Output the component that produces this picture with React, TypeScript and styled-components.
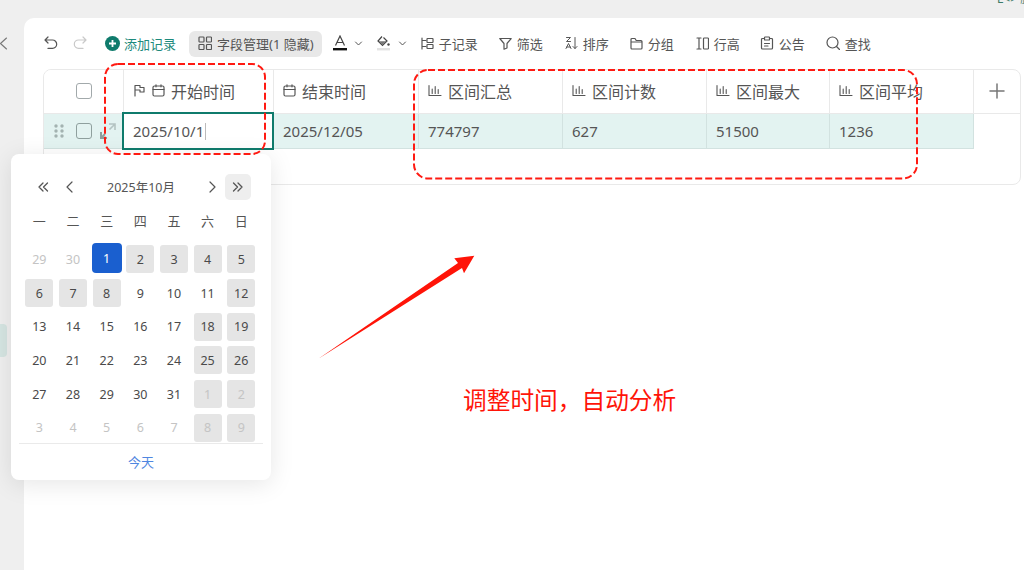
import styled, { createGlobalStyle } from "styled-components";
import type { ReactNode } from "react";

const GlobalStyle = createGlobalStyle`
  html, body {
    margin: 0;
    padding: 0;
    background: #efefef;
  }
  * {
    box-sizing: border-box;
  }
`;

const Page = styled.div`
  position: relative;
  display: flex;
  width: 1024px;
  height: 570px;
  overflow: hidden;
  background: #efefef;
  color: #444;
  font-family: "Noto Sans", "Noto Sans CJK SC", sans-serif;
`;

const Sidebar = styled.div`
  display: flex;
  flex-direction: column;
  flex: 0 0 24px;
  padding-top: 37px;
  color: #777;
`;

const SideMarker = styled.div`
  width: 7px;
  height: 33px;
  margin-top: 274px;
  border-radius: 0 4px 4px 0;
  background: #d5e5e2;
`;

const CornerText = styled.div`
  position: absolute;
  top: -8px;
  left: 997px;
  font-size: 12px;
  line-height: 14px;
  color: #3d7a68;
  white-space: nowrap;
`;

const Panel = styled.main`
  flex: 1;
  margin-top: 18px;
  padding: 12px 3px 0 19px;
  border-top-left-radius: 10px;
  background: #fff;
`;

const Toolbar = styled.div`
  display: flex;
  align-items: center;
  height: 26px;
  margin-bottom: 13px;
  font-size: 13px;
  color: #555;
`;

const ToolIcon = styled.span<{ $w: number; $mr?: number; $c?: string }>`
  display: inline-flex;
  flex: 0 0 ${(p) => p.$w}px;
  width: ${(p) => p.$w}px;
  margin-right: ${(p) => p.$mr ?? 0}px;
  color: ${(p) => p.$c ?? "#555"};
`;

const ToolItem = styled.div<{ $ml: number }>`
  display: flex;
  align-items: center;
  gap: 5px;
  margin-left: ${(p) => p.$ml}px;
  white-space: nowrap;
`;

const AddRecord = styled(ToolItem)`
  gap: 4px;
  color: #1d8a7c;
`;

const FieldButton = styled(ToolItem)`
  height: 26px;
  margin-top: 2px;
  padding: 0 8px 2px 9px;
  border-radius: 6px;
  background: #e8e8e8;
`;

const MenuItem = styled(ToolItem)`
  gap: 7px;
`;

const Table = styled.section`
  display: flex;
  width: 978px;
  height: 116px;
  overflow: hidden;
  border: 1px solid #e9e9e9;
  border-radius: 8px;
  background: #fff;
`;

const Rows = styled.div`
  flex: 0 0 930px;
`;

const Row = styled.div<{ $h: number; $active?: boolean }>`
  display: grid;
  grid-template-columns: 80px 150px 145px 144px 144px 123px 144px;
  height: ${(p) => p.$h}px;
  border-bottom: 1px solid ${(p) => (p.$active ? "#d2e2e0" : "#e9e9e9")};
  background: ${(p) => (p.$active ? "#e3f3f1" : "#fff")};
`;

const HeadCell = styled.div`
  display: flex;
  align-items: center;
  gap: 6px;
  padding: 0 0 2px 9px;
  border-right: 1px solid #e9e9e9;
  font-size: 16px;
  color: #555;
  white-space: nowrap;
`;

const CheckCell = styled.div<{ $active?: boolean }>`
  display: flex;
  align-items: center;
  padding: ${(p) => (p.$active ? "0 0 0 9px" : "0 0 2px 32px")};
  border-right: 1px solid ${(p) => (p.$active ? "transparent" : "#e9e9e9")};
`;

const Checkbox = styled.span`
  display: block;
  flex: 0 0 16px;
  height: 16px;
  border: 1.5px solid #a2a9ab;
  border-radius: 3px;
  background: #fff;
`;

const RowCheckbox = styled(Checkbox)`
  margin: 0 8px 0 11px;
  background: transparent;
  border-color: #8fa09e;
`;

const DataCell = styled.div`
  display: flex;
  align-items: center;
  padding-left: 9px;
  border-right: 1px solid #d2e2e0;
  font-size: 15px;
  color: #555;
`;

const ActiveCell = styled(DataCell)`
  position: relative;
  background: #fff;
  border-right: 0;
  &::after {
    content: "";
    position: absolute;
    inset: -2px 0 -2px -2px;
    border: 2px solid #0f7b6c;
  }
`;

const Caret = styled.span`
  display: inline-block;
  width: 1px;
  height: 17px;
  margin-left: 1px;
  background: #bbb;
`;

const BlankRow = styled.div`
  height: 35px;
`;

const AddColumn = styled.div`
  flex: 1;
`;

const AddHead = styled.div`
  display: flex;
  align-items: center;
  justify-content: center;
  height: 44px;
  padding-bottom: 2px;
  border-bottom: 1px solid #e9e9e9;
  color: #777;
`;

const Popover = styled.div`
  position: absolute;
  top: 154px;
  left: 11px;
  display: flex;
  flex-direction: column;
  width: 260px;
  height: 326px;
  padding: 20px 8px 0;
  border-radius: 8px;
  background: #fff;
  box-shadow: 0 4px 24px rgba(0, 0, 0, 0.1);
  color: #444;
`;

const NavRow = styled.div`
  display: flex;
  align-items: center;
  height: 26px;
  font-size: 13px;
  color: #555;
`;

const NavButton = styled.span<{ $ml: number; $mr?: number; $on?: boolean }>`
  display: flex;
  align-items: center;
  justify-content: center;
  flex: 0 0 26px;
  height: 26px;
  margin-left: ${(p) => p.$ml}px;
  margin-right: ${(p) => p.$mr ?? 0}px;
  border-radius: 5px;
  background: ${(p) => (p.$on ? "#eeeeee" : "transparent")};
`;

const NavTitle = styled.span`
  flex: 1;
  padding-bottom: 1px;
  text-align: center;
  font-size: 12.5px;
`;

const Grid = styled.div`
  display: grid;
  grid-template-columns: repeat(7, 33.67px);
  grid-template-rows: 37.67px;
  grid-auto-rows: 33.67px;
  margin: 5px 0 0 3.5px;
  justify-items: center;
  align-items: center;
`;

const Weekday = styled.span`
  align-self: start;
  font-size: 13px;
  line-height: 33.67px;
  color: #555;
`;

const Day = styled.span<{ $grey?: boolean; $muted?: boolean }>`
  display: flex;
  align-items: center;
  justify-content: center;
  width: 28px;
  height: 28px;
  border-radius: 3px;
  font-size: 12.5px;
  background: ${(p) => (p.$grey ? "#e5e5e5" : "transparent")};
  color: ${(p) => (p.$muted ? "#c4c4c4" : "#4a4a4a")};
`;

const SelectedDay = styled(Day)`
  width: 30px;
  height: 30px;
  margin-top: -2px;
  border-radius: 4px;
  background: #1a5fcf;
  color: #fff;
`;

const PopFooter = styled.div`
  display: flex;
  align-items: center;
  justify-content: center;
  height: 37px;
  margin-top: -2px;
  border-top: 1px solid #eaeaea;
  font-size: 13px;
  color: #4f86e0;
`;

const Annotations = styled.svg`
  position: absolute;
  inset: 0;
  pointer-events: none;
`;

const AnnotationText = styled.div`
  position: absolute;
  top: 381px;
  left: 463px;
  font-family: "Noto Sans CJK SC", sans-serif;
  font-size: 23.7px;
  line-height: 36px;
  color: #ff1408;
  white-space: nowrap;
`;

const Svg = ({ w = 14, h = 14, sw = 1.2, children }: { w?: number; h?: number; sw?: number; children: ReactNode }) => (
  <svg width={w} height={h} viewBox={`0 0 ${w} ${h}`} fill="none" stroke="currentColor" strokeWidth={sw} strokeLinecap="round" strokeLinejoin="round">
    {children}
  </svg>
);

const CalendarIcon = () => (
  <Svg w={13} h={13}>
    <rect x="1" y="2" width="11" height="10" rx="1.5" />
    <path d="M1 5.5h11M4 .8v2M9 .8v2" />
  </Svg>
);

const StatsIcon = () => (
  <Svg w={14} h={13} sw={1.1}>
    <path d="M1 1.5v10h12M4.2 5v4.5M7.2 2.5v7M10.2 5.5v4" />
  </Svg>
);

const FlagIcon = () => (
  <Svg w={13} h={13}>
    <path d="M2 12V1.5h5v2h4v4.5H7V6H2" />
  </Svg>
);

const DoubleChevron = ({ left }: { left?: boolean }) => (
  <Svg w={12} h={12} sw={1.3}>
    {left ? <path d="M6 2 2 6l4 4M10.5 2 6.5 6l4 4" /> : <path d="m1.5 2 4 4-4 4M6 2l4 4-4 4" />}
  </Svg>
);

const Chevron = ({ left }: { left?: boolean }) => (
  <Svg w={12} h={14} sw={1.2}>
    {left ? <path d="M8 2 3 7l5 5" /> : <path d="m4 2 5 5-5 5" />}
  </Svg>
);

const SmallDown = () => (
  <Svg w={9} h={7} sw={1}>
    <path d="m1.5 2 3 3 3-3" />
  </Svg>
);

const stats = [
  { name: "区间汇总", value: "774797" },
  { name: "区间计数", value: "627" },
  { name: "区间最大", value: "51500" },
  { name: "区间平均", value: "1236" },
];

const weekdays = ["一", "二", "三", "四", "五", "六", "日"];

// d = label, g = grey background, m = outside this month
const days = [
  { d: 29, m: true }, { d: 30, m: true }, { d: 1, s: true }, { d: 2, g: true }, { d: 3, g: true }, { d: 4, g: true }, { d: 5, g: true },
  { d: 6, g: true }, { d: 7, g: true }, { d: 8, g: true }, { d: 9 }, { d: 10 }, { d: 11 }, { d: 12, g: true },
  { d: 13 }, { d: 14 }, { d: 15 }, { d: 16 }, { d: 17 }, { d: 18, g: true }, { d: 19, g: true },
  { d: 20 }, { d: 21 }, { d: 22 }, { d: 23 }, { d: 24 }, { d: 25, g: true }, { d: 26, g: true },
  { d: 27 }, { d: 28 }, { d: 29 }, { d: 30 }, { d: 31 }, { d: 1, g: true, m: true }, { d: 2, g: true, m: true },
  { d: 3, m: true }, { d: 4, m: true }, { d: 5, m: true }, { d: 6, m: true }, { d: 7, m: true }, { d: 8, g: true, m: true }, { d: 9, g: true, m: true },
];

const App = () => {
  return (
    <Page>
      <GlobalStyle />
      <CornerText>L&lt;&gt; 脚</CornerText>
      <Sidebar>
        <Svg w={8} h={13} sw={1.1}>
          <path d="M6.5 1 .5 6.5l6 5.5" />
        </Svg>
        <SideMarker />
      </Sidebar>

      <Panel>
        <Toolbar>
          <ToolIcon $w={16} $mr={13}>
            <Svg w={16} h={16}>
              <path d="M5 2 2 5l3 3M2 5h7.5a4.2 4.2 0 0 1 0 8.4H5" />
            </Svg>
          </ToolIcon>
          <ToolIcon $w={16} $c="#c9c9c9">
            <Svg w={16} h={16}>
              <path d="m11 2 3 3-3 3M14 5H6.5a4.2 4.2 0 0 0 0 8.4H11" />
            </Svg>
          </ToolIcon>
          <AddRecord $ml={17}>
            <ToolIcon $w={15} $c="#0f7b6c">
              <svg width="15" height="15" viewBox="0 0 15 15">
                <circle cx="7.5" cy="7.5" r="7.5" fill="currentColor" />
                <path d="M7.5 4v7M4 7.5h7" stroke="#fff" strokeWidth="1.8" />
              </svg>
            </ToolIcon>
            添加记录
          </AddRecord>
          <FieldButton $ml={13}>
            <Svg w={14} h={14}>
              <rect x="1" y="1" width="5" height="5" rx=".8" />
              <rect x="8.5" y="1" width="5" height="5" rx=".8" />
              <rect x="1" y="8.5" width="5" height="5" rx=".8" />
              <rect x="8.5" y="8.5" width="5" height="5" rx=".8" />
            </Svg>
            字段管理(1 隐藏)
          </FieldButton>
          <MenuItem $ml={11}>
            <svg width="14" height="16" viewBox="0 0 14 16" fill="none">
              <path d="m2.5 10.5 4.5-9.5 4.5 9.5M4 7.5h6" stroke="#444" strokeWidth="1.2" />
              <rect y="13" width="14" height="2.4" fill="#111" />
            </svg>
            <SmallDown />
          </MenuItem>
          <MenuItem $ml={13}>
            <svg width="15" height="16" viewBox="0 0 15 16" fill="none">
              <path d="M6 1.5 2 6l4.5 4.5L11 6 7.5 2.5" stroke="#444" strokeWidth="1.2" />
              <path d="M2.5 6.2h8L6.5 9.8Z" fill="#777" />
              <circle cx="12.5" cy="9.5" r="1.2" fill="#444" />
              <rect x="1" y="13" width="13" height="2.4" fill="#e2e2e2" />
            </svg>
            <SmallDown />
          </MenuItem>
          <ToolItem $ml={14}>
            <Svg w={13} h={13}>
              <path d="M1 1v11M1 3.5h4M1 9.5h4" />
              <rect x="6" y="1.5" width="6" height="4" rx=".5" />
              <rect x="6" y="7.5" width="6" height="4" rx=".5" />
            </Svg>
            子记录
          </ToolItem>
          <ToolItem $ml={21}>
            <Svg w={13} h={13}>
              <path d="M.8 1.5h11.4L8 6.5V11l-3 1.2V6.5Z" />
            </Svg>
            筛选
          </ToolItem>
          <ToolItem $ml={22}>
            <Svg w={13} h={14} sw={1}>
              <path d="M1.5 1.5h4L1.5 5.5h4M1 12.5l2.5-5 2.5 5M1.8 11h3.4M10 1.5v11M8 10.5l2 2 2-2" />
            </Svg>
            排序
          </ToolItem>
          <ToolItem $ml={21}>
            <Svg w={13} h={13}>
              <path d="M1 2.5a1 1 0 0 1 1-1h3l1.2 2H11a1 1 0 0 1 1 1V11a1 1 0 0 1-1 1H2a1 1 0 0 1-1-1ZM1 5h11" />
            </Svg>
            分组
          </ToolItem>
          <ToolItem $ml={22}>
            <Svg w={13} h={13}>
              <path d="M1 1h4M1 12h4M3 1v11" />
              <rect x="7.5" y="1" width="5" height="11" rx=".8" />
            </Svg>
            行高
          </ToolItem>
          <ToolItem $ml={20}>
            <Svg w={14} h={14}>
              <path d="M4.5 2.5H2.5a1 1 0 0 0-1 1V12a1 1 0 0 0 1 1h9a1 1 0 0 0 1-1V3.5a1 1 0 0 0-1-1h-2" />
              <rect x="4.5" y="1" width="5" height="3" rx=".6" />
              <path d="M4.5 7.5h5M4.5 10h3.5" />
            </Svg>
            公告
          </ToolItem>
          <ToolItem $ml={21}>
            <Svg w={14} h={14}>
              <circle cx="6.5" cy="6.5" r="5.5" />
              <path d="m10.5 10.5 3 3" />
            </Svg>
            查找
          </ToolItem>
        </Toolbar>

        <Table>
          <Rows>
            <Row $h={44}>
              <CheckCell>
                <Checkbox />
              </CheckCell>
              <HeadCell>
                <FlagIcon />
                <CalendarIcon />
                开始时间
              </HeadCell>
              <HeadCell>
                <CalendarIcon />
                结束时间
              </HeadCell>
              {stats.map((s) => (
                <HeadCell key={s.name}>
                  <StatsIcon />
                  {s.name}
                </HeadCell>
              ))}
            </Row>
            <Row $h={35} $active>
              <CheckCell $active>
                <svg width="12" height="16" viewBox="0 0 12 16" fill="#a3b3b1">
                  <circle cx="3" cy="3" r="1.7" />
                  <circle cx="9" cy="3" r="1.7" />
                  <circle cx="3" cy="8" r="1.7" />
                  <circle cx="9" cy="8" r="1.7" />
                  <circle cx="3" cy="13" r="1.7" />
                  <circle cx="9" cy="13" r="1.7" />
                </svg>
                <RowCheckbox />
                <svg width="16" height="16" viewBox="0 0 16 16" fill="none">
                  <path d="M9 1h6v6M15 1 9.5 6.5" stroke="#b4c4c2" strokeWidth="1.6" />
                  <path d="M1 9v6h6M1 15l4-4" stroke="#8e9e9c" strokeWidth="2" />
                </svg>
              </CheckCell>
              <ActiveCell>
                2025/10/1
                <Caret />
              </ActiveCell>
              <DataCell>2025/12/05</DataCell>
              {stats.map((s) => (
                <DataCell key={s.name}>{s.value}</DataCell>
              ))}
            </Row>
            <BlankRow />
          </Rows>
          <AddColumn>
            <AddHead>
              <Svg w={16} h={16} sw={1.5}>
                <path d="M8 1v14M1 8h14" />
              </Svg>
            </AddHead>
          </AddColumn>
        </Table>
      </Panel>

      <Popover>
        <NavRow>
          <NavButton $ml={11}>
            <DoubleChevron left />
          </NavButton>
          <NavButton $ml={1}>
            <Chevron left />
          </NavButton>
          <NavTitle>2025年10月</NavTitle>
          <NavButton $ml={0}>
            <Chevron />
          </NavButton>
          <NavButton $ml={0} $mr={12} $on>
            <DoubleChevron />
          </NavButton>
        </NavRow>
        <Grid>
          {weekdays.map((w) => (
            <Weekday key={w}>{w}</Weekday>
          ))}
          {days.map((c, i) =>
            c.s ? (
              <SelectedDay key={i}>{c.d}</SelectedDay>
            ) : (
              <Day key={i} $grey={c.g} $muted={c.m}>
                {c.d}
              </Day>
            )
          )}
        </Grid>
        <PopFooter>今天</PopFooter>
      </Popover>

      <Annotations width="1024" height="570" viewBox="0 0 1024 570" fill="none">
        <rect x="105" y="64" width="160" height="90" rx="13" stroke="#ff1a12" strokeWidth="2" strokeDasharray="7 3" />
        <rect x="414" y="70" width="503" height="108.5" rx="14" stroke="#ff1a12" strokeWidth="2" strokeDasharray="7 3" />
        <polygon points="318,359 458,263 454.3,258.3 474.3,255.7 464,273.3 462,268" fill="#ff1408" />
      </Annotations>
      <AnnotationText>调整时间，自动分析</AnnotationText>
    </Page>
  );
};

export default App;
